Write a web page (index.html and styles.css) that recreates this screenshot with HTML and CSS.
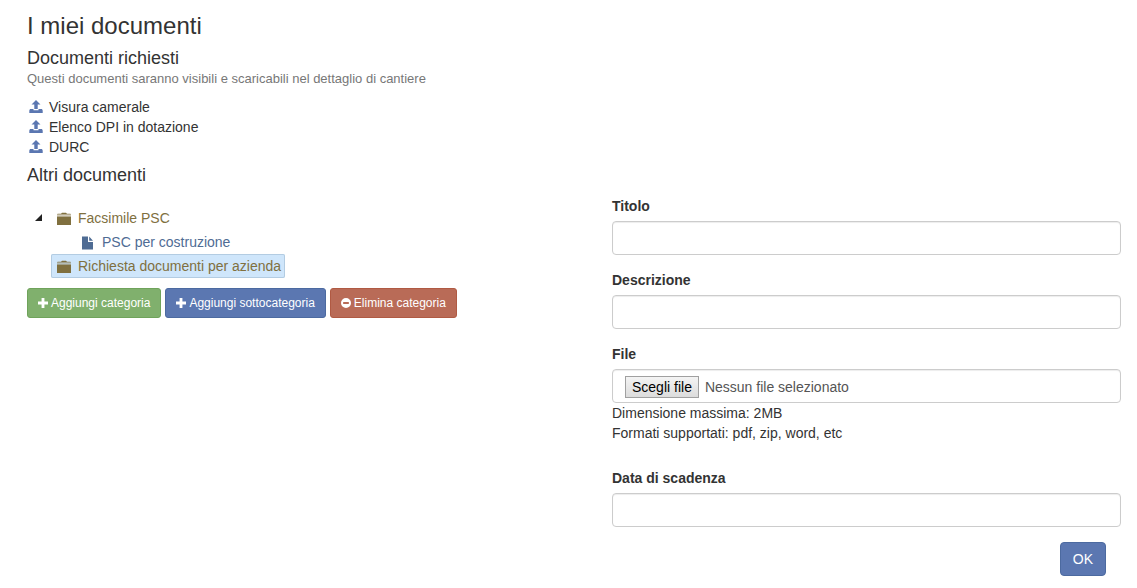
FILE: index.html
```html
<!DOCTYPE html>
<html lang="it">
<head>
<meta charset="utf-8">
<meta name="viewport" content="width=device-width, initial-scale=1">
<title>I miei documenti</title>
<link rel="stylesheet" href="styles.css">
</head>
<body>
<svg class="sprite" aria-hidden="true">
  <symbol id="upload" viewBox="0 0 14 14"><path d="M7 0l4.500 4.500H8.700V9H5.300V4.500H2.500zM1 9h3.500v1.200h5V9H13l.7 1.500V13H.3v-2.500z"/></symbol>
  <symbol id="folder" viewBox="0 0 14 14"><path d="M0 2.500Q0 1.700.8 1.700H4L5 .7h4l1 1h3.200q.8 0 .8.800z"/><path opacity=".35" d="M0 2.500h14v2H0z"/><path d="M0 4.500h14V13H0z"/></symbol>
  <symbol id="doc" viewBox="0 0 12 14"><path d="M0 .5h6V6h5v7.500H0zM7.200.5L11 4.700H7.200z"/></symbol>
  <symbol id="plus" viewBox="0 0 12 12"><path d="M4.300 0h3.400v4.300H12v3.400H7.700V12H4.300V7.700H0V4.300h4.300z"/></symbol>
  <symbol id="minus" viewBox="0 0 12 12"><path fill-rule="evenodd" d="M6 0a6 6 0 1 1 0 12A6 6 0 0 1 6 0zM2.600 4.700v2.600h6.800V4.700z"/></symbol>
</svg>
<main class="page">
  <h1 class="title">I miei documenti</h1>
  <section>
    <h2 class="subtitle">Documenti richiesti</h2>
    <p class="hint">Questi documenti saranno visibili e scaricabili nel dettaglio di cantiere</p>
    <ul class="required">
      <li><a href="#visura" aria-label="Carica visura camerale"><svg class="icon-upload"><use href="#upload"/></svg></a>Visura camerale</li>
      <li><a href="#dpi" aria-label="Carica elenco DPI"><svg class="icon-upload"><use href="#upload"/></svg></a>Elenco DPI in dotazione</li>
      <li><a href="#durc" aria-label="Carica DURC"><svg class="icon-upload"><use href="#upload"/></svg></a>DURC</li>
    </ul>
  </section>
  <h2 class="subtitle">Altri documenti</h2>
  <div class="columns">
    <section class="library">
      <ul class="tree">
        <li>
          <div class="node">
            <button class="toggle" type="button" aria-label="Chiudi categoria" aria-expanded="true"><svg class="arrow" viewBox="0 0 6 6"><path d="M6 0v6H0z"/></svg></button>
            <a class="entry category" href="#facsimile"><svg class="icon-node"><use href="#folder"/></svg>Facsimile PSC</a>
          </div>
          <ul class="branch">
            <li class="node"><a class="entry document" href="#psc"><svg class="icon-node"><use href="#doc"/></svg>PSC per costruzione</a></li>
          </ul>
        </li>
        <li class="node leaf"><a class="entry category selected" href="#richiesta"><svg class="icon-node"><use href="#folder"/></svg>Richiesta documenti per azienda</a></li>
      </ul>
      <div class="actions">
        <button class="btn small green" type="button"><svg class="icon-btn"><use href="#plus"/></svg>Aggiungi categoria</button>
        <button class="btn small blue" type="button"><svg class="icon-btn"><use href="#plus"/></svg>Aggiungi sottocategoria</button>
        <button class="btn small red" type="button"><svg class="icon-btn"><use href="#minus"/></svg>Elimina categoria</button>
      </div>
    </section>
    <form class="form">
      <div class="field">
        <label for="titolo">Titolo</label>
        <input class="control" id="titolo" type="text">
      </div>
      <div class="field">
        <label for="descrizione">Descrizione</label>
        <input class="control" id="descrizione" type="text">
      </div>
      <div class="field file-field">
        <label for="file">File</label>
        <div class="control picker">
          <span class="choose">Scegli file</span>
          <span>Nessun file selezionato</span>
          <input class="native-file" id="file" type="file">
        </div>
        <p class="help">Dimensione massima: 2MB<br>Formati supportati: pdf, zip, word, etc</p>
      </div>
      <div class="field">
        <label for="scadenza">Data di scadenza</label>
        <input class="control" id="scadenza" type="text">
      </div>
      <div class="submit"><button class="btn blue" type="submit">OK</button></div>
    </form>
  </div>
</main>
</body>
</html>
```
FILE: styles.css
```css
* { box-sizing: border-box; }

body {
  margin: 0;
  background: #fff;
  color: #333;
  font: 14px/20px "Liberation Sans", Arial, sans-serif;
}

ul { margin: 0; padding: 0; list-style: none; }
p { margin: 0; }
a { text-decoration: none; }
svg { fill: currentColor; flex: none; }
.sprite { display: none; }

.page { padding: 13px 16px 12px 27px; }
.title { margin: 0 0 9px; font-size: 24px; font-weight: 400; line-height: 26px; }
.subtitle { margin: 0; font-size: 18px; font-weight: 400; line-height: 20px; }
.hint { padding-top: 1px; color: #777; font-size: 13px; }

.required { margin: 8px 0; }
.required li { display: flex; align-items: center; gap: 6px; }
.required a { display: flex; padding-left: 2px; color: #5b77b1; }
.icon-upload { width: 14px; height: 14px; }

.columns {
  display: grid;
  grid-template-columns: 1fr 1fr;
  gap: 76px;
  margin-top: 11px;
}

.library { padding-top: 10px; }
.node { display: flex; height: 24px; }
.leaf { padding-left: 24px; }
.branch { padding-left: 48px; }
.toggle {
  display: flex;
  align-items: center;
  width: 24px;
  padding: 0 0 2px 8px;
  border: 0;
  background: none;
  color: #222;
}
.arrow { width: 7px; height: 7px; }
.entry {
  display: flex;
  align-items: center;
  gap: 7px;
  padding: 0 4px 0 6px;
  border-radius: 2px;
}
.icon-node { width: 14px; height: 14px; margin-top: 2px; }
.category { color: #80703f; }
.document { color: #4f6c94; }
.selected { background: #cfe6fb; box-shadow: inset 0 0 0 1px #b3cce2; }

.actions { display: flex; gap: 4px; margin-top: 10px; white-space: nowrap; }
.btn {
  padding: 6px 12px;
  border: 1px solid;
  border-radius: 4px;
  color: #fff;
  font: inherit;
}
.small {
  display: flex;
  align-items: center;
  gap: 3px;
  padding: 5px 10px;
  border-radius: 3px;
  font-size: 12px;
  line-height: 18px;
}
.icon-btn { width: 10px; height: 10px; }
.green { background: #80b06d; border-color: #6fa35b; }
.blue { background: #5b77b1; border-color: #4c6aa0; }
.red { background: #b96b57; border-color: #b05a43; }

.field { margin-bottom: 15px; }
.field label { display: block; margin-bottom: 5px; font-weight: 700; }
.control {
  display: block;
  width: 100%;
  height: 34px;
  padding: 6px 12px;
  border: 1px solid #ccc;
  border-radius: 4px;
  background: #fff;
  box-shadow: inset 0 1px 1px rgba(0, 0, 0, .075);
  color: #555;
  font: inherit;
}
.file-field { margin-bottom: 25px; }
.picker { position: relative; display: flex; align-items: center; gap: 6px; padding-top: 7px; padding-bottom: 5px; }
.choose {
  padding: 0 6px;
  border: 1px solid #a0a0a0;
  background: linear-gradient(#f4f4f4, #dcdcdc);
  color: #000;
}
.native-file { position: absolute; inset: 0; width: 100%; opacity: 0; }
.submit { padding-right: 15px; text-align: right; }
```
